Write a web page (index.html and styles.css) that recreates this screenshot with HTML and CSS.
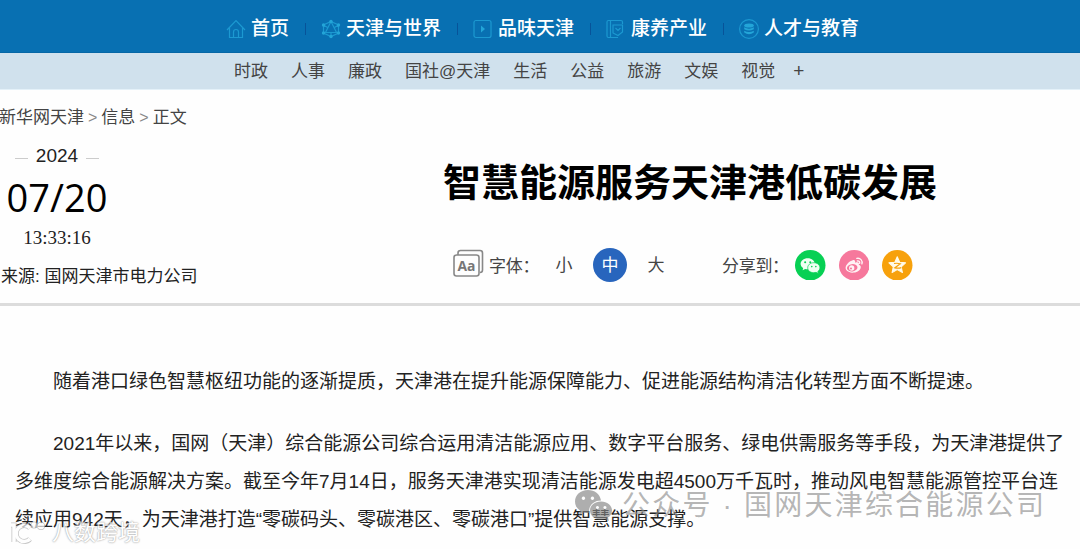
FILE: index.html
```html
<!DOCTYPE html>
<html lang="zh-CN">
<head>
    <meta charset="UTF-8">
    <meta name="viewport" content="width=device-width, initial-scale=1.0">
    <title>智慧能源服务天津港低碳发展</title>
    <link rel="stylesheet" href="styles.css">
</head>

<body>
    <nav class="main-nav">
        <a class="nav-item">
            <svg class="nav-icon" viewBox="0 0 20 20"><path d="M1 11 L10 1.500 L19 11 M3.500 9 V18.500 H16.500 V9 M7.500 18.500 V13 Q7.500 10.500 10 10.500 T12.500 13 V18.500"/></svg>
            首页
        </a>
        <span class="sep"></span>
        <a class="nav-item">
            <svg class="nav-icon" viewBox="0 0 20 20"><path d="M10 2.500 L17.500 6 V14 L10 17.500 L2.500 14 V6 Z M10 2.500 L4.500 13.500 H15.500 Z M2.500 6 L6.500 8.500 M17.500 6 L13.500 8.500 M10 13.500 V17"/><g class="dots"><circle cx="10" cy="2.500" r="1.700"/><circle cx="2.500" cy="6" r="1.700"/><circle cx="17.500" cy="6" r="1.700"/><circle cx="2.500" cy="14" r="1.700"/><circle cx="17.500" cy="14" r="1.700"/><circle cx="10" cy="17.500" r="1.700"/></g></svg>
            天津与世界
        </a>
        <span class="sep"></span>
        <a class="nav-item">
            <svg class="nav-icon" viewBox="0 0 20 20"><rect x="1" y="1.500" width="17" height="17" rx="2"/><path class="dots" d="M8 6.500 L12 10 L8 13.500 Z"/></svg>
            品味天津
        </a>
        <span class="sep"></span>
        <a class="nav-item">
            <svg class="nav-icon" viewBox="0 0 20 20"><path d="M16.500 5 V3 Q16.500 1.500 15 1.500 H2.500 Q1 1.500 1 3 V17 Q1 18.500 2.500 18.500 H12 M4.500 2 V18 M7 6 H16.500 V13 L12 16.500 L7 14 Z M9.500 9 L12 11.500 L14.500 9"/></svg>
            康养产业
        </a>
        <span class="sep"></span>
        <a class="nav-item">
            <svg class="nav-icon" viewBox="0 0 20 20"><circle cx="10" cy="10" r="9.400"/><g class="dots"><ellipse cx="10" cy="6.500" rx="4.800" ry="2"/><path d="M5.200 8.300 Q10 11 14.800 8.300 V10.200 Q10 12.700 5.200 10.200 Z M5.200 11.800 Q10 14.300 14.800 11.800 V13.500 Q10 17 5.200 13.500 Z"/></g></svg>
            人才与教育
        </a>
    </nav>
    <nav class="sub-nav">
        <a>时政</a>
        <a>人事</a>
        <a>廉政</a>
        <a>国社@天津</a>
        <a>生活</a>
        <a>公益</a>
        <a>旅游</a>
        <a>文娱</a>
        <a>视觉</a>
        <a class="more">+</a>
    </nav>

    <div class="crumbs">新华网天津<span>&gt;</span>信息<span>&gt;</span>正文</div>

    <header class="article-head">
        <div class="info">
            <div class="date">
                <div class="year">2024</div>
                <div class="day">07/20</div>
                <div class="time">13:33:16</div>
            </div>
            <div class="source">来源: 国网天津市电力公司</div>
        </div>
        <div class="head-main">
            <h1>智慧能源服务天津港低碳发展</h1>
            <div class="tools">
                <svg class="font-icon" viewBox="0 0 32 30"><path d="M5 6 V4 Q5 1.500 7.500 1.500 H27 Q29.500 1.500 29.500 4 V21 Q29.500 23.500 27 23.500"/><rect x="1" y="6" width="25" height="21" rx="2.500"/><text x="4.500" y="21.500" textLength="18" lengthAdjust="spacingAndGlyphs">Aa</text></svg>
                <span class="label">字体：</span>
                <span class="size">小</span>
                <span class="size active">中</span>
                <span class="size">大</span>
                <span class="label share-label">分享到：</span>
                <div class="share">
                    <svg viewBox="0 0 30 30"><circle cx="15" cy="15" r="15" fill="#07d054"/><path fill="#effff3" d="M12.500 8 C8.500 8 5.500 10.500 5.500 13.500 C5.500 15.300 6.500 16.800 8 17.800 L7.500 20 L10 18.700 C11 19 12 19 13 19 C16.500 19 19.500 16.500 19.500 13.500 C19.500 10.500 16.500 8 12.500 8 Z"/><path fill="#effff3" stroke="#07d054" stroke-width=".7" d="M18.500 12.500 C15 12.500 12.500 14.700 12.500 17.500 C12.500 20.300 15 22.300 18.500 22.300 C19.300 22.300 20 22.200 20.700 22 L23 23.200 L22.400 21.200 C23.700 20.300 24.500 19 24.500 17.500 C24.500 14.700 22 12.500 18.500 12.500 Z"/><g fill="#07d054"><circle cx="10" cy="12" r="1"/><circle cx="15" cy="12" r="1"/><circle cx="16.500" cy="16.300" r=".8"/><circle cx="20.500" cy="16.300" r=".8"/></g></svg>
                    <svg viewBox="0 0 30 30"><circle cx="15" cy="15" r="15" fill="#f6789c"/><path fill="#fff3f5" d="M13.500 10 C15.500 9.500 16.300 10.700 15.800 12.500 C18 11.700 20.300 12 19.500 14.500 C21 15 21.800 16 21.300 17.700 C20.500 20.800 16.500 22.500 12.800 22.300 C9 22 6.300 20 6.500 17.300 C6.700 14.300 10.500 10.700 13.500 10 Z"/><ellipse cx="13" cy="17.500" rx="5.200" ry="3.600" fill="#f6789c" transform="rotate(-8 13 17.500)"/><circle cx="12.500" cy="17.700" r="2.600" fill="#fff3f5"/><circle cx="11.800" cy="18.200" r="1" fill="#f6789c"/><path fill="none" stroke="#fff3f5" stroke-width="1.300" stroke-linecap="round" d="M17.500 8.300 C21 7.500 23.500 10.500 22.500 13.700 M18 10.800 C19.800 10.500 20.700 11.700 20.300 13.200"/></svg>
                    <svg viewBox="0 0 30 30"><circle cx="15" cy="15" r="15" fill="#f7a10c"/><path fill="#fffbea" stroke="#fffbea" stroke-linejoin="round" d="M15 6.700 L17.400 12 L23.200 12.600 L18.900 16.500 L20.100 22.200 L15 19.300 L9.900 22.200 L11.100 16.500 L6.800 12.600 L12.600 12 Z"/><path fill="none" stroke="#f7a10c" stroke-width="1.200" d="M11.800 13.300 Q15 12.700 18 13.500 L12.700 17.500 Q16 18.300 19 17.300"/></svg>
                </div>
            </div>
        </div>
    </header>

    <article class="content">
        <p>随着港口绿色智慧枢纽功能的逐渐提质，天津港在提升能源保障能力、促进能源结构清洁化转型方面不断提速。</p>
        <p>2021年以来，国网（天津）综合能源公司综合运用清洁能源应用、数字平台服务、绿电供需服务等手段，为天津港提供了多维度综合能源解决方案。截至今年7月14日，服务天津港实现清洁能源发电超4500万千瓦时，推动风电智慧能源管控平台连续应用942天，为天津港打造“零碳码头、零碳港区、零碳港口”提供智慧能源支撑。</p>
    </article>

    <div class="watermark account">
        <svg viewBox="0 0 40 34"><path d="M14 1 C6.500 1 1 6 1 12.500 C1 16.500 3 19.500 6 21.500 L5 26 L10 23.500 C11.500 24 13 24 15 24 C14.500 16 20 11.500 27 11.500 C26 5 20.500 1 14 1 Z M9.500 7.500 A1.700 1.700 0 1 1 9.400 7.500 Z M18.500 7.500 A1.700 1.700 0 1 1 18.400 7.500 Z"/><path d="M27 12.500 C20.500 12.500 16 16.500 16 21.500 C16 26.500 20.500 30.500 27 30.500 C28.500 30.500 30 30.300 31 30 L35 32 L34 28.500 C36.500 27 38 24.500 38 21.500 C38 16.500 33.500 12.500 27 12.500 Z M23.500 17 A1.500 1.500 0 1 1 23.400 17 Z M31 17 A1.500 1.500 0 1 1 30.900 17 Z"/></svg>
        <span>公众号 · 国网天津综合能源公司</span>
    </div>
    <div class="watermark site">
        <svg viewBox="0 0 42 24"><g class="outline"><path d="M2 4 H5 V21"/><path d="M21 7 A8 8 0 1 0 21 18"/><circle cx="25" cy="4" r="1"/><circle cx="32" cy="5" r="1.500"/></g><g class="fill"><path d="M2 4 H5 V21"/><path d="M21 7 A8 8 0 1 0 21 18"/><circle cx="25" cy="4" r="1"/><circle cx="32" cy="5" r="1.500"/></g></svg>
        <span>八数跨境</span>
    </div>
</body>
</html>
```
FILE: styles.css
```css
* {
    box-sizing: border-box;
}

body {
    margin: 0;
    height: 549px;
    position: relative;
    overflow: hidden;
    background-color: #fefefe;
    color: #222;
    font-family: "Liberation Sans", "Noto Sans CJK SC", sans-serif;
    text-spacing-trim: space-all;
}

.main-nav {
    display: flex;
    align-items: center;
    height: 53px;
    padding: 5px 0 0 226px;
    background-color: #0870b2;
    border-bottom: 1px solid #0667a6;
}

.nav-item {
    display: flex;
    align-items: center;
    gap: 5px;
    color: #fff;
    font-size: 19px;
    font-weight: 500;
    line-height: 28px;
    white-space: nowrap;
}

.nav-icon {
    width: 20px;
    height: 20px;
    fill: none;
    stroke: #1c99d1;
    stroke-width: 1.2;
}

.nav-icon .dots {
    fill: #23a5d8;
    stroke: none;
}

.sep {
    width: 1px;
    height: 12px;
    margin: 0 15px 0 16px;
    background-color: #075399;
}

.sub-nav {
    display: flex;
    align-items: center;
    gap: 23px;
    height: 37px;
    padding: 2px 0 0 234px;
    background-color: #d0e1ed;
    border-bottom: 1px solid #e4f1f9;
    color: #444;
    font-size: 17px;
    line-height: 34px;
}

.sub-nav .more {
    margin: -2px 0 0 -5px;
    font-size: 19px;
}

.crumbs {
    height: 54px;
    margin-left: -1px;
    padding-top: 1px;
    font-size: 17px;
    line-height: 54px;
    color: #444;
}

.crumbs span {
    margin: 0 4px;
    color: #888;
    font-size: 16px;
}

.article-head {
    display: flex;
    height: 162px;
    border-bottom: 3px solid #dcdcdc;
}

.info {
    width: 300px;
}

.date {
    width: 114px;
    text-align: center;
}

.year {
    display: flex;
    align-items: center;
    justify-content: center;
    gap: 8px;
    height: 23px;
    font-size: 19px;
}

.year::before,
.year::after {
    content: "";
    width: 13px;
    height: 1px;
    margin-top: 6px;
    background-color: #ccc;
}

.day {
    height: 61px;
    font-family: "Open Sans", sans-serif;
    font-size: 38px;
    line-height: 61px;
    color: #000;
}

.time {
    height: 20px;
    font-family: "Liberation Serif", serif;
    font-size: 19px;
    line-height: 20px;
}

.source {
    padding: 1px 0 0 1px;
    font-size: 17px;
    line-height: 56px;
}

.head-main {
    width: 780px;
}

h1 {
    margin: 0;
    padding: 14px 0 0 143px;
    font-size: 38px;
    line-height: 50px;
    color: #000;
}

.tools {
    display: flex;
    align-items: center;
    height: 34px;
    margin-top: 40px;
    padding-left: 153px;
    font-size: 17px;
    color: #444;
}

.font-icon {
    width: 32px;
    height: 30px;
    margin: -3px 4px 0 0;
    fill: none;
    stroke: #888;
    stroke-width: 1.6;
}

.font-icon text {
    font-family: "Open Sans", sans-serif;
    font-size: 15px;
    font-weight: 700;
    fill: #777;
    stroke: none;
}

.label {
    width: 58px;
    margin-top: -2px;
    letter-spacing: -0.3px;
    white-space: nowrap;
}

.size {
    width: 34px;
    height: 34px;
    line-height: 35px;
    text-align: center;
}

.size.active {
    margin: 0 12px;
    border-radius: 50%;
    background-color: #2865bd;
    color: #fff;
}

.share-label {
    width: 73px;
    margin-left: 49px;
}

.share {
    display: flex;
    gap: 13px;
}

.share svg {
    width: 30.5px;
    height: 30.5px;
}

.content {
    padding: 57px 8px 0 15px;
    font-size: 19px;
    line-height: 38px;
}

.content p {
    margin: 0 0 24px;
    text-indent: 38px;
}

.watermark {
    position: absolute;
    display: flex;
    align-items: center;
    white-space: nowrap;
}

.account {
    left: 574px;
    top: 486px;
    gap: 8px;
    color: rgba(140, 140, 140, 0.65);
    font-size: 28px;
    letter-spacing: 2.2px;
    line-height: 40px;
}

.account svg {
    width: 40px;
    height: 34px;
    fill: rgba(130, 130, 130, 0.65);
    fill-rule: evenodd;
}

.site {
    left: 9px;
    top: 519px;
    gap: 1px;
    color: #fff;
    font-size: 22px;
    line-height: 28px;
    opacity: 0.7;
    text-shadow: 0 0 1px #888, 0 0 2px #888;
}

.site svg {
    width: 42px;
    height: 24px;
    fill: none;
    overflow: visible;
}

.site .outline {
    stroke: #aaa;
    stroke-width: 5;
}

.site .fill {
    stroke: #fff;
    stroke-width: 3.5;
}
```
